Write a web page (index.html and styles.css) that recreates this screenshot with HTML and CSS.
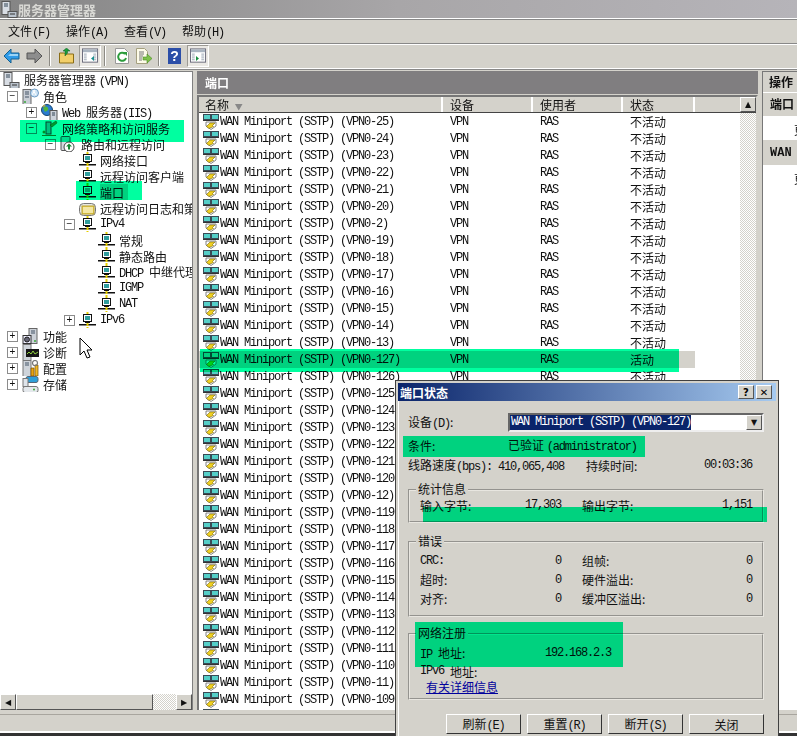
FILE: index.html
```html
<!DOCTYPE html>
<html lang="zh-CN">
<head>
  <meta charset="UTF-8" />
  <title>服务器管理器</title>
  <link rel="stylesheet" href="styles.css">
</head>
<body>
  <svg class="sprites" xmlns="http://www.w3.org/2000/svg">
    <symbol id="port" viewBox="0 0 16 16">
      <rect x="0.500" y="0.500" width="7" height="5" fill="#55cfc8" stroke="#3a4a55"/>
      <rect x="8.500" y="0.500" width="7" height="5" fill="#55cfc8" stroke="#3a4a55"/>
      <path d="M0 6.500h16" stroke="#333"/>
      <path d="M3 8h10v4l-5 3.500L3 12z" fill="#fff" stroke="#666" stroke-width="0.8"/>
      <path d="M3.500 12.500l3.500-3.500 5 0-2.500 2.500 1 1-4.500 2z" fill="#f0d020" stroke="#75640a" stroke-width="0.6"/>
    </symbol>
    <symbol id="net" viewBox="0 0 17 17">
      <rect x="7.500" y="0" width="2" height="2" fill="#e8d000"/>
      <rect x="4.500" y="2.500" width="8" height="7" fill="#fff" stroke="#111"/>
      <rect x="6" y="4" width="5" height="4" fill="#2f9d9d"/>
      <rect x="6" y="10" width="5" height="1" fill="#111"/>
      <rect x="0" y="12" width="17" height="1.500" fill="#111"/>
      <rect x="7.500" y="11" width="2" height="3" fill="#e8d000"/>
      <rect x="7.500" y="15" width="2" height="2" fill="#e8d000"/>
      <rect x="2" y="16" width="13" height="1" fill="#111"/>
    </symbol>
    <symbol id="server" viewBox="0 0 17 17">
      <rect x="1" y="0.500" width="8" height="13" fill="#d8dde4" stroke="#555"/>
      <path d="M3 3h4M3 5h4" stroke="#345"/>
      <rect x="7" y="10.500" width="9" height="6" fill="#b9c2cc" stroke="#555"/>
      <path d="M9 13h5" stroke="#333"/>
    </symbol>
    <symbol id="role" viewBox="0 0 17 17">
      <rect x="1" y="1.500" width="8" height="15" fill="#c9ced6" stroke="#666"/>
      <path d="M3 4h4M3 6h4M3 9h4" stroke="#456"/>
      <circle cx="3" cy="14" r="1" fill="#38a838"/>
      <circle cx="12.500" cy="5" r="4" fill="#cfe4f5" stroke="#6d9cc4"/>
      <path d="M10 7l3-5M11 2l3 5" stroke="#fff"/>
    </symbol>
    <symbol id="web" viewBox="0 0 17 17">
      <circle cx="6" cy="6" r="5.500" fill="#2a7bd0" stroke="#17466f"/>
      <path d="M2 4c2-2 4-2 5 0s-1 3-3 4zM8 7l3-1 0 3z" fill="#52b53c"/>
      <path d="M1 3l2-2 2 1z" fill="#e9c21a"/>
      <rect x="9" y="6.500" width="7" height="10" fill="#ccd2da" stroke="#555"/>
      <path d="M11 9h3M11 11h3" stroke="#345"/>
    </symbol>
    <symbol id="policy" viewBox="0 0 17 17">
      <path d="M1 15h14v1.500H1z" fill="#0a7d3a"/>
      <rect x="5" y="2" width="5" height="12" fill="#b8c0c8" stroke="#444"/>
      <path d="M9 5l6-4 1 2-5 4z" fill="#1f9a45" stroke="#0b5a25" stroke-width="0.6"/>
      <circle cx="3" cy="12" r="1.500" fill="#2b8e3c"/>
    </symbol>
    <symbol id="route" viewBox="0 0 17 17">
      <rect x="1" y="0.500" width="9" height="14" rx="1" fill="#d5dae0" stroke="#555"/>
      <circle cx="9" cy="11" r="5" fill="#fff" stroke="#444"/>
      <path d="M9 7.500l3 3h-2v3H8v-3H6z" fill="#178a35"/>
    </symbol>
    <symbol id="log" viewBox="0 0 17 17">
      <rect x="0.500" y="3.500" width="16" height="12" rx="4" fill="#e8e8e0" stroke="#777"/>
      <rect x="3" y="6" width="12" height="8" fill="#e8cf4a" stroke="#b8a030"/>
      <path d="M4 8h10M4 10h10M4 12h10" stroke="#fff"/>
    </symbol>
    <symbol id="feature" viewBox="0 0 17 17">
      <rect x="7" y="0.500" width="8" height="15" fill="#ccd1d8" stroke="#666"/>
      <path d="M9 3h4M9 5h4" stroke="#456"/>
      <circle cx="13" cy="13" r="1" fill="#38a838"/>
      <rect x="1" y="7.500" width="8" height="8" fill="#eef" stroke="#333"/>
      <circle cx="5" cy="11.500" r="2.500" fill="#667" stroke="#222"/>
    </symbol>
    <symbol id="diag" viewBox="0 0 17 17">
      <rect x="1" y="0.500" width="8" height="16" fill="#cfd4da" stroke="#777"/>
      <rect x="4" y="5" width="13" height="8" fill="#161616"/>
      <path d="M5 10l2-2 2 2 2-3 2 3 3-2" stroke="#8fd13f" fill="none"/>
    </symbol>
    <symbol id="config" viewBox="0 0 17 17">
      <rect x="1" y="0.500" width="8" height="16" fill="#cfd4da" stroke="#777"/>
      <path d="M3 3h4M3 5h4" stroke="#456"/>
      <path d="M9 8h3v8H9z" fill="#e8a312" stroke="#7a5200" stroke-width="0.7"/>
      <path d="M13 5h3v11h-3z" fill="#f0b92a" stroke="#7a5200" stroke-width="0.7"/>
      <circle cx="13" cy="3" r="2.500" fill="none" stroke="#777" stroke-width="1.200"/>
    </symbol>
    <symbol id="storage" viewBox="0 0 17 17">
      <rect x="4" y="0.500" width="12" height="6" rx="2" fill="#2e9fd8" stroke="#567"/>
      <rect x="1" y="2.500" width="5" height="8" fill="#dfe4ea" stroke="#777"/>
      <rect x="1" y="10.500" width="15" height="6" rx="2" fill="#e4e8ec" stroke="#777"/>
      <circle cx="12" cy="13.500" r="1" fill="#38a838"/>
    </symbol>
    <symbol id="pane" viewBox="0 0 18 18">
      <rect x="0.500" y="1.500" width="16" height="14" fill="#fff" stroke="#667"/>
      <rect x="1" y="2" width="15" height="3" fill="#a9b4c0"/>
      <path d="M2 7h3M2 9h3M2 11h3M2 13h3M12 7h3M12 9h3M12 11h3M12 13h3" stroke="#9aa6b2"/>
    </symbol>
  </svg>

  <div class="titlebar">
    <svg class="ico17 title-ico"><use href="#server"/></svg>
    <span>服务器管理器</span>
  </div>

  <div class="menubar">
    <span class="menu-item">文件<span class="lat">(F)</span></span>
    <span class="menu-item">操作<span class="lat">(A)</span></span>
    <span class="menu-item">查看<span class="lat">(V)</span></span>
    <span class="menu-item">帮助<span class="lat">(H)</span></span>
  </div>

  <div class="toolbar">
    <svg class="tool tool-back" width="17" height="16" viewBox="0 0 17 16"><path d="M1 8l7-7v4h8v6H8v4z" fill="#2f9be8" stroke="#16608f"/><path d="M7 6h8v2H5z" fill="#9ad4f6"/></svg>
    <svg class="tool tool-fwd" width="17" height="16" viewBox="0 0 17 16"><path d="M16 8L9 1v4H1v6h8v4z" fill="#8d8d8d" stroke="#555"/></svg>
    <i class="tool-sep sep-1"></i>
    <svg class="tool tool-up" width="15" height="16" viewBox="0 0 15 16"><path d="M0.500 5h5l1 1h8v9H0.500z" fill="#f2cf6a" stroke="#8a6d16"/><path d="M6 8V3H4l3.500-3L11 3H8.500v2z" fill="#1c9c3a" stroke="#0f5e22" stroke-width="0.500"/></svg>
    <span class="tool-btn btn-tree">
      <svg width="17" height="18"><use href="#pane"/><path d="M12 9v5l-3-2.500z" fill="#1a8f8f"/></svg>
    </span>
    <i class="tool-sep sep-2"></i>
    <svg class="tool tool-refresh" width="14" height="16" viewBox="0 0 14 16"><path d="M0.500 0.500h9l4 4v11h-13z" fill="#fff" stroke="#999"/><path d="M10 6a4 4 0 1 0 1 4" fill="none" stroke="#2c9c3c" stroke-width="2"/><path d="M8 4l4 0 0 4z" fill="#2c9c3c"/></svg>
    <svg class="tool tool-export" width="16" height="16" viewBox="0 0 16 16"><path d="M0.500 0.500h8l3 3v12h-11z" fill="#fdfbe8" stroke="#a5a080"/><path d="M3 4h5M3 6h5M3 8h4M3 10h3M3 12h3" stroke="#777"/><path d="M7 9h4V6l5 4.500L11 15v-3H7z" fill="#7fc24a" stroke="#4c8a24" stroke-width="0.600"/></svg>
    <i class="tool-sep sep-3"></i>
    <svg class="tool tool-help" width="13" height="16" viewBox="0 0 13 16"><rect width="13" height="16" fill="#2b4ea8"/><text x="6.500" y="13" text-anchor="middle" fill="#fff" font-family="Liberation Sans" font-size="14" font-weight="700">?</text></svg>
    <span class="tool-btn btn-action">
      <svg width="17" height="18"><use href="#pane"/><path d="M6 9v5l3-2.500z" fill="#1a8f3f"/></svg>
    </span>
  </div>

  <div class="main">
    <div class="tree-pane">
      <div class="tree">
        <div class="node root"><svg class="ico17"><use href="#server"/></svg><span>服务器管理器 <span class="lat">(VPN)</span></span></div>
        <div class="node l1"><b class="exp">−</b><svg class="ico17"><use href="#role"/></svg><span>角色</span></div>
        <div class="node l2"><b class="exp">+</b><svg class="ico17"><use href="#web"/></svg><span><span class="lat">Web </span>服务器<span class="lat">(IIS)</span></span></div>
        <div class="node l2"><b class="exp">−</b><svg class="ico17"><use href="#policy"/></svg><span>网络策略和访问服务</span></div>
        <div class="node l3"><b class="exp">−</b><svg class="ico17"><use href="#route"/></svg><span>路由和远程访问</span></div>
        <div class="node l4"><b class="no-exp"></b><svg class="ico17"><use href="#net"/></svg><span>网络接口</span></div>
        <div class="node l4"><b class="no-exp"></b><svg class="ico17"><use href="#net"/></svg><span>远程访问客户端</span></div>
        <div class="node l4"><b class="no-exp"></b><svg class="ico17"><use href="#net"/></svg><span class="selected">端口</span></div>
        <div class="node l4"><b class="no-exp"></b><svg class="ico17"><use href="#log"/></svg><span>远程访问日志和策略</span></div>
        <div class="node l3-leaf"><b class="exp">−</b><svg class="ico17"><use href="#net"/></svg><span class="lat">IPv4</span></div>
        <div class="node l5"><b class="no-exp"></b><svg class="ico17"><use href="#net"/></svg><span>常规</span></div>
        <div class="node l5"><b class="no-exp"></b><svg class="ico17"><use href="#net"/></svg><span>静态路由</span></div>
        <div class="node l5"><b class="no-exp"></b><svg class="ico17"><use href="#net"/></svg><span><span class="lat">DHCP </span>中继代理程序</span></div>
        <div class="node l5"><b class="no-exp"></b><svg class="ico17"><use href="#net"/></svg><span class="lat">IGMP</span></div>
        <div class="node l5"><b class="no-exp"></b><svg class="ico17"><use href="#net"/></svg><span class="lat">NAT</span></div>
        <div class="node l3-leaf"><b class="exp">+</b><svg class="ico17"><use href="#net"/></svg><span class="lat">IPv6</span></div>
        <div class="node l1"><b class="exp">+</b><svg class="ico17"><use href="#feature"/></svg><span>功能</span></div>
        <div class="node l1"><b class="exp">+</b><svg class="ico17"><use href="#diag"/></svg><span>诊断</span></div>
        <div class="node l1"><b class="exp">+</b><svg class="ico17"><use href="#config"/></svg><span>配置</span></div>
        <div class="node l1"><b class="exp">+</b><svg class="ico17"><use href="#storage"/></svg><span>存储</span></div>
      </div>
      <div class="hscroll">
        <span class="sb-btn">◀</span><span class="hs-thumb"></span><span class="hs-track"></span><span class="sb-btn">▶</span>
      </div>
    </div>

    <div class="center-pane">
      <div class="pane-head">端口</div>
      <div class="list-box">
        <div class="list-head">
          <div class="th th-name">名称 <i class="sort">▼</i></div>
          <div class="th th-col">设备</div>
          <div class="th th-col">使用者</div>
          <div class="th th-state">状态</div>
          <div class="th-up">▲</div>
        </div>
        <div class="list-body">
          <div class="rows">
            <div class="row"><svg class="ico16"><use href="#port"/></svg><span class="nm">WAN Miniport (SSTP) (VPN0-25)</span><span class="lat">VPN</span><span class="lat">RAS</span><span>不活动</span></div>
            <div class="row"><svg class="ico16"><use href="#port"/></svg><span class="nm">WAN Miniport (SSTP) (VPN0-24)</span><span class="lat">VPN</span><span class="lat">RAS</span><span>不活动</span></div>
            <div class="row"><svg class="ico16"><use href="#port"/></svg><span class="nm">WAN Miniport (SSTP) (VPN0-23)</span><span class="lat">VPN</span><span class="lat">RAS</span><span>不活动</span></div>
            <div class="row"><svg class="ico16"><use href="#port"/></svg><span class="nm">WAN Miniport (SSTP) (VPN0-22)</span><span class="lat">VPN</span><span class="lat">RAS</span><span>不活动</span></div>
            <div class="row"><svg class="ico16"><use href="#port"/></svg><span class="nm">WAN Miniport (SSTP) (VPN0-21)</span><span class="lat">VPN</span><span class="lat">RAS</span><span>不活动</span></div>
            <div class="row"><svg class="ico16"><use href="#port"/></svg><span class="nm">WAN Miniport (SSTP) (VPN0-20)</span><span class="lat">VPN</span><span class="lat">RAS</span><span>不活动</span></div>
            <div class="row"><svg class="ico16"><use href="#port"/></svg><span class="nm">WAN Miniport (SSTP) (VPN0-2)</span><span class="lat">VPN</span><span class="lat">RAS</span><span>不活动</span></div>
            <div class="row"><svg class="ico16"><use href="#port"/></svg><span class="nm">WAN Miniport (SSTP) (VPN0-19)</span><span class="lat">VPN</span><span class="lat">RAS</span><span>不活动</span></div>
            <div class="row"><svg class="ico16"><use href="#port"/></svg><span class="nm">WAN Miniport (SSTP) (VPN0-18)</span><span class="lat">VPN</span><span class="lat">RAS</span><span>不活动</span></div>
            <div class="row"><svg class="ico16"><use href="#port"/></svg><span class="nm">WAN Miniport (SSTP) (VPN0-17)</span><span class="lat">VPN</span><span class="lat">RAS</span><span>不活动</span></div>
            <div class="row"><svg class="ico16"><use href="#port"/></svg><span class="nm">WAN Miniport (SSTP) (VPN0-16)</span><span class="lat">VPN</span><span class="lat">RAS</span><span>不活动</span></div>
            <div class="row"><svg class="ico16"><use href="#port"/></svg><span class="nm">WAN Miniport (SSTP) (VPN0-15)</span><span class="lat">VPN</span><span class="lat">RAS</span><span>不活动</span></div>
            <div class="row"><svg class="ico16"><use href="#port"/></svg><span class="nm">WAN Miniport (SSTP) (VPN0-14)</span><span class="lat">VPN</span><span class="lat">RAS</span><span>不活动</span></div>
            <div class="row"><svg class="ico16"><use href="#port"/></svg><span class="nm">WAN Miniport (SSTP) (VPN0-13)</span><span class="lat">VPN</span><span class="lat">RAS</span><span>不活动</span></div>
            <div class="row row-on"><svg class="ico16"><use href="#port"/></svg><span class="nm">WAN Miniport (SSTP) (VPN0-127)</span><span class="lat">VPN</span><span class="lat">RAS</span><span>活动</span></div>
            <div class="row"><svg class="ico16"><use href="#port"/></svg><span class="nm">WAN Miniport (SSTP) (VPN0-126)</span><span class="lat">VPN</span><span class="lat">RAS</span><span>不活动</span></div>
            <div class="row"><svg class="ico16"><use href="#port"/></svg><span class="nm">WAN Miniport (SSTP) (VPN0-125)</span><span class="lat">VPN</span><span class="lat">RAS</span><span>不活动</span></div>
            <div class="row"><svg class="ico16"><use href="#port"/></svg><span class="nm">WAN Miniport (SSTP) (VPN0-124)</span><span class="lat">VPN</span><span class="lat">RAS</span><span>不活动</span></div>
            <div class="row"><svg class="ico16"><use href="#port"/></svg><span class="nm">WAN Miniport (SSTP) (VPN0-123)</span><span class="lat">VPN</span><span class="lat">RAS</span><span>不活动</span></div>
            <div class="row"><svg class="ico16"><use href="#port"/></svg><span class="nm">WAN Miniport (SSTP) (VPN0-122)</span><span class="lat">VPN</span><span class="lat">RAS</span><span>不活动</span></div>
            <div class="row"><svg class="ico16"><use href="#port"/></svg><span class="nm">WAN Miniport (SSTP) (VPN0-121)</span><span class="lat">VPN</span><span class="lat">RAS</span><span>不活动</span></div>
            <div class="row"><svg class="ico16"><use href="#port"/></svg><span class="nm">WAN Miniport (SSTP) (VPN0-120)</span><span class="lat">VPN</span><span class="lat">RAS</span><span>不活动</span></div>
            <div class="row"><svg class="ico16"><use href="#port"/></svg><span class="nm">WAN Miniport (SSTP) (VPN0-12)</span><span class="lat">VPN</span><span class="lat">RAS</span><span>不活动</span></div>
            <div class="row"><svg class="ico16"><use href="#port"/></svg><span class="nm">WAN Miniport (SSTP) (VPN0-119)</span><span class="lat">VPN</span><span class="lat">RAS</span><span>不活动</span></div>
            <div class="row"><svg class="ico16"><use href="#port"/></svg><span class="nm">WAN Miniport (SSTP) (VPN0-118)</span><span class="lat">VPN</span><span class="lat">RAS</span><span>不活动</span></div>
            <div class="row"><svg class="ico16"><use href="#port"/></svg><span class="nm">WAN Miniport (SSTP) (VPN0-117)</span><span class="lat">VPN</span><span class="lat">RAS</span><span>不活动</span></div>
            <div class="row"><svg class="ico16"><use href="#port"/></svg><span class="nm">WAN Miniport (SSTP) (VPN0-116)</span><span class="lat">VPN</span><span class="lat">RAS</span><span>不活动</span></div>
            <div class="row"><svg class="ico16"><use href="#port"/></svg><span class="nm">WAN Miniport (SSTP) (VPN0-115)</span><span class="lat">VPN</span><span class="lat">RAS</span><span>不活动</span></div>
            <div class="row"><svg class="ico16"><use href="#port"/></svg><span class="nm">WAN Miniport (SSTP) (VPN0-114)</span><span class="lat">VPN</span><span class="lat">RAS</span><span>不活动</span></div>
            <div class="row"><svg class="ico16"><use href="#port"/></svg><span class="nm">WAN Miniport (SSTP) (VPN0-113)</span><span class="lat">VPN</span><span class="lat">RAS</span><span>不活动</span></div>
            <div class="row"><svg class="ico16"><use href="#port"/></svg><span class="nm">WAN Miniport (SSTP) (VPN0-112)</span><span class="lat">VPN</span><span class="lat">RAS</span><span>不活动</span></div>
            <div class="row"><svg class="ico16"><use href="#port"/></svg><span class="nm">WAN Miniport (SSTP) (VPN0-111)</span><span class="lat">VPN</span><span class="lat">RAS</span><span>不活动</span></div>
            <div class="row"><svg class="ico16"><use href="#port"/></svg><span class="nm">WAN Miniport (SSTP) (VPN0-110)</span><span class="lat">VPN</span><span class="lat">RAS</span><span>不活动</span></div>
            <div class="row"><svg class="ico16"><use href="#port"/></svg><span class="nm">WAN Miniport (SSTP) (VPN0-11)</span><span class="lat">VPN</span><span class="lat">RAS</span><span>不活动</span></div>
            <div class="row"><svg class="ico16"><use href="#port"/></svg><span class="nm">WAN Miniport (SSTP) (VPN0-109)</span><span class="lat">VPN</span><span class="lat">RAS</span><span>不活动</span></div>
            <div class="row"><svg class="ico16"><use href="#port"/></svg><span class="nm">WAN Miniport (SSTP) (VPN0-108)</span><span class="lat">VPN</span><span class="lat">RAS</span><span>不活动</span></div>
          </div>
          <div class="vtrack"></div>
        </div>
      </div>
    </div>

    <div class="action-pane">
      <div class="act-head">操作</div>
      <div class="act-sec">端口</div>
      <div class="act-item">更多操作</div>
      <div class="act-sec act-wan">WAN Miniport</div>
      <div class="act-item">更多操作</div>
    </div>
  </div>

  <div class="statusbar"></div>

  <!-- green marks painted over the screenshot -->
  <i class="mark mark-policy"></i>
  <i class="mark mark-ports"></i>
  <i class="mark mark-row"></i>

  <svg class="cursor" width="14" height="22" viewBox="0 0 14 22"><path d="M1 1v17l4-4 3 7 3-1-3-7h5z" fill="#fff" stroke="#000"/></svg>

  <div class="dialog">
    <div class="dlg-title">
      <span>端口状态</span>
      <span class="cap-btn cap-help">?</span>
      <span class="cap-btn">✕</span>
    </div>
    <div class="dlg-body">
      <div class="dev-row">
        <span class="dev-label">设备<span class="lat">(D)</span>:</span>
        <div class="combo">
          <span class="combo-text">WAN Miniport (SSTP) (VPN0-127)</span>
          <span class="combo-btn">▼</span>
        </div>
      </div>
      <div class="info-row">
        <span class="cond-label">条件:</span>
        <span>已验证 <span class="lat">(administrator)</span></span>
      </div>
      <div class="speed-row">
        <span class="speed-a">线路速度<span class="lat">(bps): 410,065,408</span></span>
        <span>持续时间:</span>
        <span class="lat speed-t">00:03:36</span>
      </div>

      <div class="group group-stats">
        <span class="legend">统计信息</span>
        <div class="stat-grid">
          <div class="stat"><span>输入字节:</span><span class="lat">17,303</span></div>
          <div class="stat"><span>输出字节:</span><span class="lat">1,151</span></div>
        </div>
      </div>

      <div class="group group-errors">
        <span class="legend">错误</span>
        <div class="stat-grid">
          <div class="stat"><span class="lat">CRC:</span><span class="lat">0</span></div>
          <div class="stat"><span>组帧:</span><span class="lat">0</span></div>
          <div class="stat"><span>超时:</span><span class="lat">0</span></div>
          <div class="stat"><span>硬件溢出:</span><span class="lat">0</span></div>
          <div class="stat"><span>对齐:</span><span class="lat">0</span></div>
          <div class="stat"><span>缓冲区溢出:</span><span class="lat">0</span></div>
        </div>
      </div>

      <div class="group group-net">
        <span class="legend">网络注册</span>
        <div class="ip-row"><span><span class="lat">IP </span>地址:</span><span class="lat">192.168.2.3</span></div>
        <div class="ip6-row"><span class="lat">IPv6 </span>地址:</div>
        <a class="more-link" href="#">有关详细信息</a>
      </div>

      <div class="dlg-buttons">
        <button>刷新<span class="lat">(E)</span></button>
        <button>重置<span class="lat">(R)</span></button>
        <button>断开<span class="lat">(S)</span></button>
        <button>关闭</button>
      </div>
    </div>

    <i class="mark mark-cond"></i>
    <i class="mark mark-bytes"></i>
    <i class="mark mark-ip"></i>
  </div>
</body>
</html>
```

FILE: styles.css
```css
* {
  box-sizing: border-box;
  margin: 0;
  padding: 0;
}

html, body {
  width: 797px;
  height: 736px;
  overflow: hidden;
}

body {
  position: relative;
  display: flex;
  flex-direction: column;
  background: #d4d2cb;
  color: #111;
  font-family: "Noto Sans CJK SC", "Liberation Mono", monospace;
  font-size: 12px;
}

.sprites {
  display: none;
}

.lat, .nm {
  font-family: "Liberation Mono", "Noto Sans CJK SC", monospace;
  font-size: 12px;
  letter-spacing: -1.2px;
  white-space: pre;
}

svg {
  display: block;
  flex-shrink: 0;
}

.ico17 {
  width: 17px;
  height: 17px;
}

.ico16 {
  width: 16px;
  height: 16px;
}

/* window chrome */
.titlebar {
  height: 18px;
  flex-shrink: 0;
  display: flex;
  align-items: center;
  padding-left: 1px;
  background: linear-gradient(to right, #848484, #a8a6a8 50%, #b6b4b9);
  color: #d8d8d4;
  font-size: 13px;
  font-weight: 700;
}

.menubar {
  height: 26px;
  flex-shrink: 0;
  display: flex;
  align-items: center;
  padding-left: 8px;
  border-top: 1px solid #fff;
  border-bottom: 1px solid #888;
  box-shadow: inset 0 1px 0 #888;
}

.menu-item {
  width: 58px;
}

.toolbar {
  height: 26px;
  flex-shrink: 0;
  display: flex;
  align-items: center;
  padding: 0 0 3px 3px;
  border-top: 1px solid #fff;
  border-bottom: 1px solid #888;
  box-shadow: inset 0 -1px 0 #fff;
}

.tool-fwd { margin-left: 6px; }
.tool-up { margin-left: 8px; }
.tool-refresh { margin-left: 9px; }
.tool-export { margin-left: 7px; }
.tool-help { margin-left: 8px; }

.tool-sep {
  width: 2px;
  height: 20px;
  margin-left: 6px;
  border-left: 1px solid #8c8a84;
  border-right: 1px solid #fff;
}

.sep-2 { margin-left: 3px; }

.tool-btn {
  width: 22px;
  height: 22px;
  display: flex;
  align-items: center;
  justify-content: center;
  background: #ebe9e4;
  border: 1px solid #fff;
  border-top-color: #9c9a94;
  border-left-color: #9c9a94;
}

.btn-tree { margin-left: 5px; }
.btn-action { margin-left: 6px; }

.main {
  height: 640px;
  flex-shrink: 0;
  display: flex;
  padding-top: 1px;
}

/* tree */
.tree-pane {
  width: 193px;
  display: flex;
  flex-direction: column;
  background: #fff;
  border-top: 1px solid #808080;
  border-right: 1px solid #808080;
}

.tree {
  flex: 1;
  overflow: hidden;
  white-space: nowrap;
}

.node {
  height: 16px;
  display: flex;
  align-items: center;
  overflow: hidden;
}

.root { padding-left: 3px; }
.l1 { padding-left: 7px; }
.l2 { padding-left: 26px; }
.l3 { padding-left: 45px; }
.l3-leaf { padding-left: 64px; }
.l4 { padding-left: 64px; }
.l5 { padding-left: 83px; }

.exp, .no-exp {
  width: 11px;
  height: 11px;
  margin-right: 4px;
  flex-shrink: 0;
}

.exp {
  display: flex;
  align-items: center;
  justify-content: center;
  border: 1px solid #8c8c8c;
  background: #fff;
  font: 400 10px/1 "Liberation Sans", sans-serif;
}

.node svg {
  margin-right: 4px;
}

.selected {
  background: #d4d2cb;
  padding-right: 4px;
}

.hscroll {
  height: 16px;
  display: flex;
}

.sb-btn, .th-up, .combo-btn, .cap-btn {
  display: flex;
  align-items: center;
  justify-content: center;
  background: #d4d2cb;
  border: 1px solid #fff;
  border-right-color: #555;
  border-bottom-color: #555;
  font-family: "DejaVu Sans", sans-serif;
}

.sb-btn {
  width: 16px;
  font-size: 8px;
}

.hs-thumb {
  width: 137px;
  background: #d4d2cb;
  border: 1px solid #fff;
  border-right-color: #555;
  border-bottom-color: #555;
}

.hs-track, .vtrack {
  background: repeating-conic-gradient(#d4d2cb 0 25%, #fff 0 50%) 0 0 / 2px 2px;
}

.hs-track {
  flex: 1;
}

/* center list */
.center-pane {
  width: 565px;
  padding-left: 4px;
  display: flex;
  flex-direction: column;
}

.pane-head {
  height: 23px;
  padding-left: 8px;
  background: #807e80;
  color: #fff;
  font-weight: 700;
  line-height: 23px;
}

.list-box {
  flex: 1;
  min-height: 0;
  display: flex;
  flex-direction: column;
  margin-top: 1px;
  background: #fff;
  border: 2px solid #777;
  border-right-color: #d4d2cb;
  border-bottom: 0;
}

.list-head {
  height: 16px;
  display: flex;
  background: #d4d2cb;
  border-bottom: 1px solid #444;
}

.th {
  flex-shrink: 0;
  border-right: 2px solid #fff;
  padding-left: 7px;
  line-height: 15px;
}

.th-name { width: 244px; padding-left: 6px; }
.th-col { width: 90px; }
.th-state { width: 72px; }

.sort {
  font-style: normal;
  font-size: 8px;
  color: #888;
  margin-left: 3px;
}

.th-up {
  width: 16px;
  margin-left: auto;
  font-size: 8px;
}

.list-body {
  flex: 1;
  min-height: 0;
  display: flex;
}

.rows {
  flex: 1;
  overflow: hidden;
}

.row {
  height: 17px;
  display: grid;
  grid-template-columns: 17px 223px 90px 90px 1fr;
  align-items: center;
  padding-left: 4px;
  white-space: nowrap;
}

.row > span {
  overflow: hidden;
}

.row > span:nth-child(n+3) {
  padding-left: 7px;
}

.row-on {
  background: linear-gradient(#d4d2cb, #d4d2cb) 0 0 / 496px 100% no-repeat;
}

.vtrack {
  width: 16px;
}

/* action pane */
.action-pane {
  flex: 1;
  min-width: 0;
  margin-left: 4px;
  background: #fff;
  border-left: 1px solid #777;
  border-top: 1px solid #777;
  overflow: hidden;
  white-space: nowrap;
  font-weight: 700;
}

.act-head {
  height: 21px;
  padding-left: 6px;
  line-height: 20px;
  background: #d4d2cb;
  border-bottom: 1px solid #fff;
}

.act-sec {
  height: 23px;
  padding-left: 7px;
  line-height: 22px;
  background: #d4d2cb;
}

.act-wan {
  height: 25px;
  font: 700 12px/26px "Liberation Mono", monospace;
}

.act-item {
  height: 24px;
  padding: 6px 0 0 31px;
  font-weight: 400;
  line-height: 16px;
}

.statusbar {
  flex: 1;
  border-top: 4px solid #d4d2cb;
  border-bottom: 3px solid #333;
  background: #d4d2cb;
  box-shadow: inset 0 1px 0 #a8a59e, inset 0 -2px 0 #fff;
}

/* green marker overlays */
.mark {
  position: absolute;
  display: block;
  background: #00ffa0;
  mix-blend-mode: multiply;
  pointer-events: none;
}

.mark-policy { left: 20px; top: 120px; width: 164px; height: 22px; }
.mark-ports { left: 76px; top: 181px; width: 66px; height: 19px; }
.mark-row { left: 200px; top: 349px; width: 479px; height: 23px; }
.mark-cond { left: 5px; top: 53px; width: 242px; height: 21px; }
.mark-bytes { left: 25px; top: 124px; width: 344px; height: 15px; }
.mark-ip { left: 17px; top: 239px; width: 208px; height: 45px; }

.cursor {
  position: absolute;
  left: 79px;
  top: 337px;
}

/* dialog */
.dialog {
  position: absolute;
  left: 396px;
  top: 381px;
  width: 382px;
  height: 360px;
  background: #d4d2cb;
  border: 2px solid #d4d2cb;
  outline: 1px solid #404040;
  box-shadow: inset 1px 1px 0 #fff;
}

.dlg-title {
  height: 18px;
  display: flex;
  align-items: center;
  gap: 2px;
  padding-right: 4px;
  background: linear-gradient(to right, #0a246a, #a6caf0);
  color: #fff;
  font-weight: 700;
}

.dlg-title span:first-child {
  flex: 1;
  padding-left: 2px;
}

.cap-btn {
  width: 16px;
  height: 14px;
  color: #000;
  font-size: 10px;
  font-weight: 700;
}

.dlg-body {
  padding: 12px 12px 0 10px;
}

.dev-row {
  height: 19px;
  display: flex;
  align-items: center;
}

.dev-label {
  width: 100px;
  margin-top: -2px;
}

.cond-label {
  width: 100px;
}

.combo {
  flex: 1;
  height: 19px;
  display: flex;
  align-items: center;
  justify-content: space-between;
  background: #fff;
  border: 2px solid #666;
  border-right-color: #eee;
  border-bottom-color: #eee;
}

.combo-text {
  background: #0a246a;
  color: #fff;
  font-family: "Liberation Mono", monospace;
  font-size: 12px;
  letter-spacing: -1.2px;
  padding-left: 1px;
  line-height: 15px;
  white-space: pre;
}

.combo-btn {
  width: 16px;
  height: 15px;
  font-size: 8px;
}

.info-row {
  height: 14px;
  margin-top: 6px;
  display: flex;
  align-items: center;
}

.speed-row {
  height: 14px;
  margin-top: 6px;
  display: flex;
  align-items: center;
  padding-right: 12px;
}

.speed-a {
  width: 178px;
}

.speed-t {
  margin-left: auto;
}

.group {
  position: relative;
  width: 356px;
  border: 2px groove #e8e6e0;
  padding: 8px 10px 0;
}

.group-stats {
  height: 34px;
  margin-top: 17px;
  padding-top: 7px;
}

.group-errors {
  height: 76px;
  margin-top: 18px;
}

.group-net {
  height: 67px;
  margin-top: 16px;
}

.legend {
  position: absolute;
  left: 6px;
  top: -11px;
  padding: 0 2px;
  background: #d4d2cb;
}

.stat-grid {
  display: grid;
  grid-template-columns: 141px 170px;
  column-gap: 21px;
  grid-auto-rows: 19px;
}

.stat {
  display: flex;
  justify-content: space-between;
  align-items: center;
}

.group-stats .stat-grid {
  grid-auto-rows: 14px;
}

.ip-row {
  width: 191px;
  height: 19px;
  display: flex;
  justify-content: space-between;
  align-items: center;
}

.ip6-row {
  height: 18px;
  display: flex;
  align-items: center;
}

.more-link {
  display: block;
  margin-left: 6px;
  height: 14px;
  line-height: 14px;
  color: #00009c;
}

.dlg-buttons {
  display: flex;
  justify-content: flex-end;
  gap: 6px;
  margin-top: 14px;
}

.dlg-buttons button {
  width: 75px;
  height: 20px;
  background: #d4d2cb;
  border: 1px solid #fff;
  border-right-color: #333;
  border-bottom-color: #333;
  color: #111;
  font: inherit;
}
```
